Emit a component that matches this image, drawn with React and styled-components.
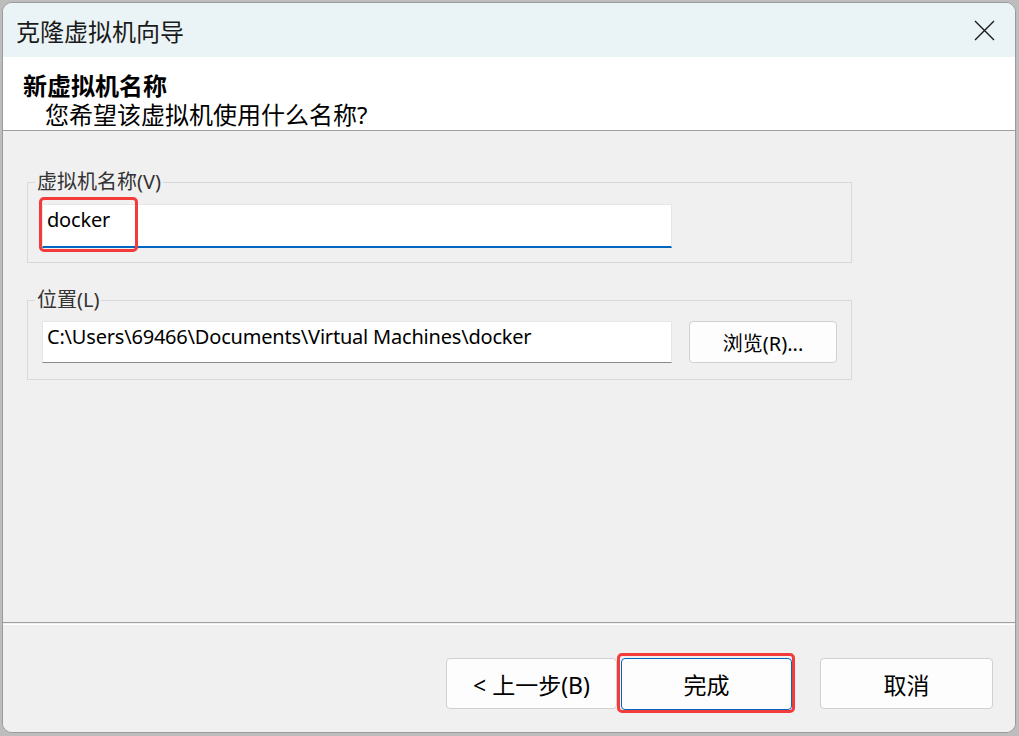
import React from "react";
import styled, { createGlobalStyle } from "styled-components";

const GlobalStyle = createGlobalStyle`
  html, body {
    margin: 0;
    padding: 0;
    background: #bdbdbd;
  }
  body {
    font-family: "Noto Sans", "Noto Sans CJK SC", sans-serif;
    color: #000;
  }
  * { box-sizing: border-box; }
`;

const Window = styled.div`
  margin: 2px 0 0 2px;
  width: 1014px;
  height: 731px;
  border: 1px solid #9b9b9b;
  border-radius: 10px;
  overflow: hidden;
  background: #f0f0f0;
  display: flex;
  flex-direction: column;
`;

const TitleBar = styled.div`
  height: 54px;
  flex: none;
  display: flex;
  align-items: center;
  padding-left: 13px;
  background: #eaf3f5;
  color: #1a1a1a;
  font-size: 24px;
`;

const CloseButton = styled.button`
  margin-left: auto;
  width: 62px;
  height: 54px;
  border: 0;
  padding: 0;
  background: transparent;
  display: flex;
  align-items: center;
  justify-content: center;
  color: #1a1a1a;
`;

const Header = styled.div`
  height: 74px;
  flex: none;
  background: #fff;
  border-bottom: 1px solid #a0a0a0;
  padding: 14px 0 0 20px;
  font-size: 24px;
  line-height: 29px;
`;

const HeaderTitle = styled.div`
  font-weight: 700;
`;

const HeaderSub = styled.div`
  padding-left: 22px;
`;

const Body = styled.div`
  flex: 1;
  padding: 39px 0 0 24px;
`;

const Group = styled.fieldset`
  width: 825px;
  margin: ${(p) => p.$gap || 0}px 0 0 0;
  border: 1px solid #d9d9d9;
  padding: ${(p) => p.$pt}px 14px ${(p) => p.$pb}px 14px;
  min-width: 0;
`;

const Legend = styled.legend`
  font-size: 20px;
  line-height: 24px;
  color: #333;
  padding: 0 2px;
  margin-left: -7px;
`;

const Row = styled.div`
  display: flex;
  align-items: flex-start;
  gap: 17px;
`;

const FieldWrap = styled.div`
  position: relative;
  width: 630px;
`;

const TextField = styled.input`
  display: block;
  width: 100%;
  height: ${(p) => p.$h}px;
  margin: 0;
  padding: 0 5px 12px 4px;
  font: inherit;
  font-size: 20px;
  line-height: 24px;
  letter-spacing: -0.2px;
  color: #000;
  background: #fff;
  border: 1px solid #e6e6e6;
  border-bottom: ${(p) => (p.$focused ? "2px solid #0067c0" : "1px solid #8a8a8a")};
  border-radius: 0;
  outline: none;
`;

const Mark = styled.span`
  position: absolute;
  left: -3px;
  top: -7px;
  width: 99px;
  height: 55px;
  border: 3px solid #f43b3b;
  border-radius: 5px;
  pointer-events: none;
`;

const Button = styled.button`
  position: relative;
  width: ${(p) => p.$w}px;
  height: ${(p) => p.$h}px;
  padding: 0;
  font: inherit;
  font-size: ${(p) => p.$fs}px;
  color: #000;
  background: #fdfdfd;
  border: 1px solid ${(p) => (p.$primary ? "#0067c0" : "#d0d0d0")};
  border-radius: 4px;
  display: flex;
  align-items: center;
  justify-content: center;
`;

const Ring = styled.span`
  position: absolute;
  inset: -6px -4px -4px -5px;
  border: 3px solid #f43b3b;
  border-radius: 5px;
  pointer-events: none;
`;

const Footer = styled.div`
  height: 110px;
  flex: none;
  background: linear-gradient(#a0a0a0 0 1px, #f0f0f0 1px 2px, #ffffff 2px 3px, #f0f0f0 3px);
  padding: 36px 22px 0 0;
  display: flex;
  justify-content: flex-end;
  align-items: flex-start;
`;

const NavPair = styled.div`
  display: flex;
  gap: 4px;
  margin-right: 28px;
`;

const CloseIcon = () => (
  <svg width="21" height="21" viewBox="0 0 21 21" fill="none">
    <path d="M1 1 L20 20 M20 1 L1 20" stroke="currentColor" strokeWidth="1.4" />
  </svg>
);

export default function App() {
  return (
    <>
      <GlobalStyle />
      <Window>
        <TitleBar>
          克隆虚拟机向导
          <CloseButton aria-label="关闭">
            <CloseIcon />
          </CloseButton>
        </TitleBar>
        <Header>
          <HeaderTitle>新虚拟机名称</HeaderTitle>
          <HeaderSub>您希望该虚拟机使用什么名称?</HeaderSub>
        </Header>
        <Body>
          <Group $pt={10} $pb={14}>
            <Legend>虚拟机名称(V)</Legend>
            <FieldWrap>
              <TextField $h={44} $focused readOnly value="docker" />
              <Mark />
            </FieldWrap>
          </Group>
          <Group $gap={25} $pt={9} $pb={16}>
            <Legend>位置(L)</Legend>
            <Row>
              <FieldWrap>
                <TextField
                  $h={42}
                  readOnly
                  value={"C:\\Users\\69466\\Documents\\Virtual Machines\\docker"}
                />
              </FieldWrap>
              <Button $w={148} $h={42} $fs={20}>浏览(R)...</Button>
            </Row>
          </Group>
        </Body>
        <Footer>
          <NavPair>
            <Button $w={171} $h={51} $fs={23}>&lt; 上一步(B)</Button>
            <Button $w={171} $h={52} $fs={23} $primary>
              完成
              <Ring />
            </Button>
          </NavPair>
          <Button $w={173} $h={51} $fs={23}>取消</Button>
        </Footer>
      </Window>
    </>
  );
}
